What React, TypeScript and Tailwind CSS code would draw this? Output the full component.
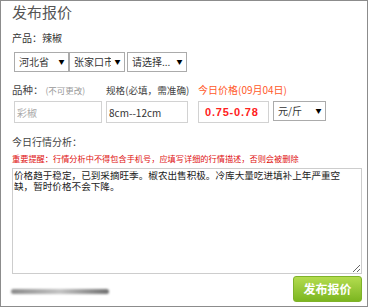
import React from "react";

const font = { fontFamily: '"Noto Sans CJK SC", "Noto Sans", sans-serif' };

function FakeSelect(props: { label: string; width: string }) {
  return (
    <div
      className={`relative h-[20px] ${props.width} border border-[#ababab] bg-white overflow-hidden flex items-center pl-[4px] text-[10px] text-[#333] leading-none`}
    >
      <span className="whitespace-nowrap">{props.label}</span>
      <span className="absolute right-0 top-0 h-full w-[13px] bg-white flex items-center justify-center text-[6px] text-black">
        ▼
      </span>
    </div>
  );
}

export default function App() {
  return (
    <div className="w-[369px] h-[308px] bg-white" style={font}>
      <div className="w-[368px] h-[307px] border border-[#8c8c8c] pl-[11px] pr-[6px]">
        <h1 className="mt-[1px] h-[20px] text-[15px] leading-[20px] text-[#555] font-normal">
          发布报价
        </h1>
        <p className="mt-[9px] h-[14px] text-[10px] leading-[14px] text-[#333]">
          产品：辣椒
        </p>

        <div className="mt-[7px] ml-[2px] flex items-center">
          <FakeSelect label="河北省" width="w-[55px]" />
          <FakeSelect label="张家口市" width="w-[56px]" />
          <div className="w-[2px]" />
          <FakeSelect label="请选择..." width="w-[60px]" />
        </div>

        <div className="mt-[11px] flex items-end">
          <div className="flex flex-col w-[94px]">
            <div className="h-[14px] leading-[14px] text-[10.5px] text-[#444] whitespace-nowrap">
              品种：<span className="text-[8.5px] text-[#999] ml-[2px]">(不可更改)</span>
            </div>
            <input
              readOnly
              value=""
              placeholder="彩椒"
              className="mt-[4px] ml-[2px] h-[22px] w-[88px] border border-[#d2d2d2] px-[2px] text-[10px] text-[#aaa] placeholder:text-[#aaa] outline-none"
            />
          </div>
          <div className="flex flex-col w-[92px]">
            <div className="h-[14px] leading-[14px] text-[9.6px] text-[#444] whitespace-nowrap">
              规格(必填，需准确)
            </div>
            <input
              readOnly
              value="8cm--12cm"
              className="mt-[4px] h-[22px] w-[82px] border border-[#d2d2d2] px-[2px] text-[10px] text-[#333] outline-none"
            />
          </div>
          <div className="flex flex-col w-[75px]">
            <div className="h-[14px] leading-[14px] text-[10px] text-[#ff5a2a] whitespace-nowrap">
              今日价格(09月04日)
            </div>
            <input
              readOnly
              value="0.75-0.78"
              style={{ fontFamily: '"Liberation Sans", sans-serif' }}
              className="mt-[4px] h-[22px] w-[71px] border border-[#d2d2d2] px-[6px] text-[11px] font-bold tracking-[0.8px] text-[#ff2020] outline-none"
            />
          </div>
          <div className="mb-[2px]">
            <FakeSelect label="元/斤" width="w-[53px]" />
          </div>
        </div>

        <p className="mt-[12px] h-[14px] leading-[14px] text-[10px] text-[#444]">
          今日行情分析：
        </p>
        <p className="mt-[3px] h-[12px] leading-[12px] text-[8.2px] text-[#e01010] whitespace-nowrap">
          重要提醒：行情分析中不得包含手机号，应填写详细的行情描述，否则会被删除
        </p>

        <textarea
          readOnly
          className="mt-[4px] block w-[350px] h-[106px] border border-[#cdcdcd] pl-[1px] pr-[12px] pt-[1px] text-[9.6px] leading-[11px] text-[#222] outline-none"
          value="价格趋于稳定，已到采摘旺季。椒农出售积极。冷库大量吃进填补上年严重空缺，暂时价格不会下降。"
        />

        <div className="mt-[2px] flex items-center justify-between w-[350px]">
          <div className="ml-[-1px] mt-[4px] h-[5px] w-[98px] rounded-full bg-gradient-to-r from-[#8a8a8a] via-[#c4c4c4] to-[#6f6f6f] blur-[1px]" />
          <button
            type="button"
            className="h-[26px] w-[69px] rounded-[3px] border border-[#7fb22a] bg-gradient-to-b from-[#b3dc4e] to-[#7cb61f] text-[12px] font-bold text-white"
          >
            发布报价
          </button>
        </div>
      </div>
    </div>
  );
}
